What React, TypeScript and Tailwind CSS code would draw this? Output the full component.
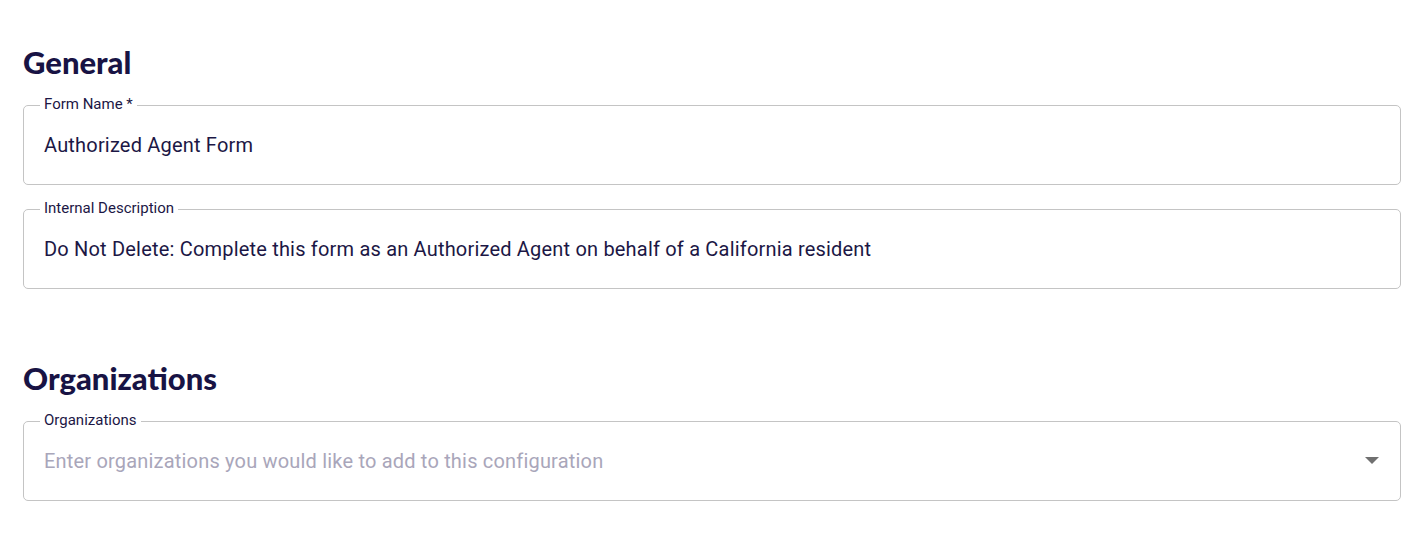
import React from 'react';

const Field: React.FC<{ label: string; value?: string; placeholder?: string; select?: boolean }> = ({ label, value, placeholder, select }) => {
  return (
    <div className="relative h-[80px] rounded-[5px] border border-[#c4c4c4] flex items-center pl-[20px] pr-[20px]">
      <span className="absolute -top-[11px] left-[16px] bg-white px-[4px] text-[15px] leading-[18px] text-[#1c1745]">
        {label}
      </span>
      {value && <span className="text-[20px] tracking-[0.19px] text-[#1c1745]">{value}</span>}
      {!value && placeholder && <span className="text-[20px] tracking-[0.19px] text-[#a9a6ba]">{placeholder}</span>}
      {select && (
        <svg className="ml-auto mr-[1px]" width="14" height="8" viewBox="0 0 14 8">
          <path d="M0 0h14L7 7z" fill="#707070" />
        </svg>
      )}
    </div>
  );
};

const App: React.FC = () => {
  return (
    <div className="bg-white min-h-screen pl-[23px] pr-[21px] pt-[44px]" style={{ fontFamily: 'Roboto, "Liberation Sans", sans-serif' }}>
      <h2 className="text-[31px] leading-[36px] font-black text-[#181344] mb-[25px]" style={{ fontFamily: 'Lato, sans-serif' }}>General</h2>
      <div className="flex flex-col gap-[24px]">
        <Field label="Form Name *" value="Authorized Agent Form" />
        <Field label="Internal Description" value="Do Not Delete: Complete this form as an Authorized Agent on behalf of a California resident" />
      </div>
      <h2 className="mt-[71px] text-[31px] leading-[36px] font-black text-[#181344] mb-[25px]" style={{ fontFamily: 'Lato, sans-serif' }}>Organizations</h2>
      <Field label="Organizations" placeholder="Enter organizations you would like to add to this configuration" select />
    </div>
  );
};

export default App;
